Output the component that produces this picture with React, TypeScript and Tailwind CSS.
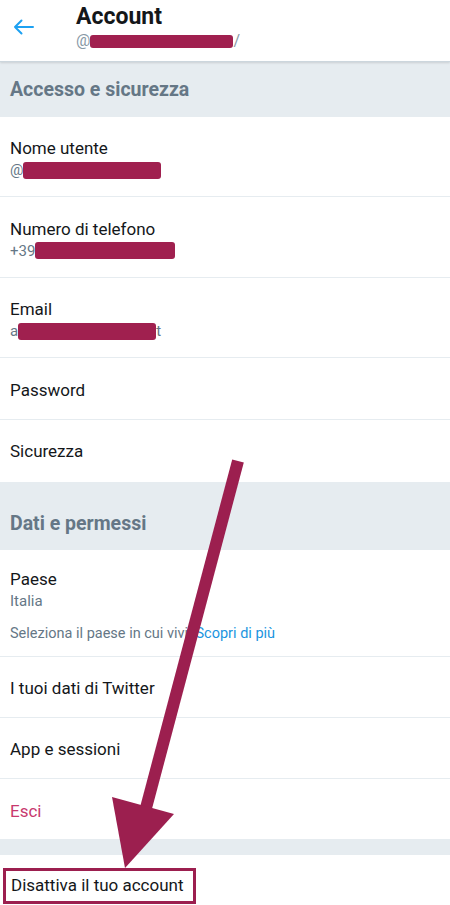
import React from "react";

const ink = "#9c1f4f";

const Scribble = ({ w, h = 16 }: { w: number; h?: number }) => (
  <span
    className="inline-block align-middle bg-[#a0204f] rounded-[3px]"
    style={{ width: w, height: h }}
  />
);

const Row = ({
  title,
  children,
  h = "h-[61px]",
  titleClass = "text-[#14171a]",
}: {
  title: string;
  children?: React.ReactNode;
  h?: string;
  titleClass?: string;
}) => (
  <div className={`${h} flex flex-col justify-center px-[10px] border-b border-[#e6ecf0]`}>
    <div className={`text-[17px] leading-[22px] ${titleClass}`}>{title}</div>
    {children}
  </div>
);

const SectionHeader = ({ label, h }: { label: string; h: string }) => (
  <div className={`${h} bg-[#e6ecf0] flex items-center px-[10px]`}>
    <span className="text-[19.5px] font-bold text-[#657786]">{label}</span>
  </div>
);

export default function App() {
  return (
    <div
      className="relative w-[450px] h-[905px] overflow-hidden bg-white"
      style={{ fontFamily: "Roboto, 'Noto Sans', sans-serif" }}
    >
      <header className="h-[62px] flex items-start bg-white border-b border-[#ccd6dd] shadow-[0_1px_2px_rgba(0,0,0,0.12)] relative z-10">
        <div className="w-[76px] h-[54px] flex items-center pl-[13px]">
          <svg width="21" height="16" viewBox="0 0 21 16" fill="none">
            <path d="M20 8H2M8.5 1.5L2 8l6.5 6.5" stroke="#1da1f2" strokeWidth="2" strokeLinecap="round" strokeLinejoin="round" />
          </svg>
        </div>
        <div className="flex flex-col pt-[3px]">
          <span className="text-[23px] leading-[28px] font-bold text-[#14171a]">Account</span>
          <span className="text-[16px] leading-[20px] text-[#8899a6] flex items-center">
            @<Scribble w={143} h={13} />/
          </span>
        </div>
      </header>

      <SectionHeader label="Accesso e sicurezza" h="h-[55px]" />

      <Row title="Nome utente" h="h-[80px] pt-[5px]">
        <div className="text-[15px] leading-[22px] text-[#657786] flex items-center">
          @<Scribble w={138} h={17} />
        </div>
      </Row>
      <Row title="Numero di telefono" h="h-[81px] pt-[5px]">
        <div className="text-[15px] leading-[22px] text-[#657786] flex items-center">
          +39<Scribble w={140} h={17} />
        </div>
      </Row>
      <Row title="Email" h="h-[80px] pt-[5px]">
        <div className="text-[15px] leading-[22px] text-[#657786] flex items-center">
          a<Scribble w={138} h={17} />t
        </div>
      </Row>
      <Row title="Password" h="h-[62px] pt-[2px]" />
      <div className="h-[62px] flex items-center px-[10px] pt-[2px]">
        <span className="text-[17px] text-[#14171a]">Sicurezza</span>
      </div>

      <SectionHeader label="Dati e permessi" h="h-[68px] pt-[16px]" />

      <div className="h-[107px] flex flex-col justify-center px-[10px] pt-[6px] border-b border-[#e6ecf0]">
        <div className="text-[17px] leading-[22px] text-[#14171a]">Paese</div>
        <div className="text-[15px] leading-[22px] text-[#657786]">Italia</div>
        <div className="text-[14.5px] leading-[22px] text-[#657786] mt-[11px]">
          Seleziona il paese in cui vivi. <span className="text-[#1b95e0]">Scopri di più</span>
        </div>
      </div>
      <Row title="I tuoi dati di Twitter" h="h-[61px] pt-[2px]" />
      <Row title="App e sessioni" h="h-[61px] pt-[2px]" />
      <Row title="Esci" h="h-[61px] pt-[3px]" titleClass="text-[#c8386e]" />
      <div className="h-[15px] bg-[#e6ecf0]" />
      <div className="h-[60px] pt-[13px] pl-[3px]">
        <div className="inline-flex items-center h-[36px] w-[193px] border-[3px] border-[#9c1f4f] px-[5px]">
          <span className="text-[17px] text-[#14171a]">Disattiva il tuo account</span>
        </div>
      </div>

      <svg
        className="absolute inset-0 pointer-events-none z-20"
        width="450"
        height="905"
        viewBox="0 0 450 905"
      >
        <line x1="238" y1="461" x2="146" y2="808" stroke={ink} strokeWidth="12" />
        <polygon points="112,797 174,814 125,868" fill={ink} />
      </svg>
    </div>
  );
}
